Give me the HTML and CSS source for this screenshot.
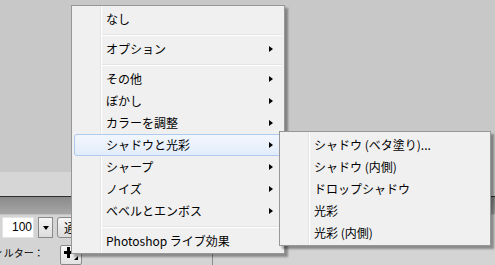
FILE: index.html
```html
<!DOCTYPE html>
<html lang="ja">
<head>
    <meta charset="UTF-8">
    <meta name="viewport" content="width=device-width, initial-scale=1.0">
    <title>フィルター</title>
    <link rel="stylesheet" href="styles.css">
</head>
<body>
    <div class="canvas"></div>
    <div class="strip-row">
        <div class="strip"></div>
    </div>
    <div class="panel-head"></div>
    <div class="panel-body">
        <div class="row">
            <div class="num">100</div>
            <div class="drop"></div>
            <div class="btn">通常</div>
        </div>
        <div class="row row-filter">
            <span class="label">フィルター：</span>
            <div class="add-btn">
                <svg width="22" height="20" viewBox="0 0 22 20">
                    <path d="M7 2h3v4h3v3h-3v4H7V9H4V6h3z" fill="#000"/>
                    <path d="M18 11v4h-4z" fill="#000"/>
                </svg>
            </div>
            <div class="divider"></div>
        </div>
    </div>

    <div class="menu main-menu">
        <div class="item">なし</div>
        <div class="sep"></div>
        <div class="item has-sub">オプション</div>
        <div class="sep"></div>
        <div class="item has-sub">その他</div>
        <div class="item has-sub">ぼかし</div>
        <div class="item has-sub">カラーを調整</div>
        <div class="item has-sub active">シャドウと光彩</div>
        <div class="item has-sub">シャープ</div>
        <div class="item has-sub">ノイズ</div>
        <div class="item has-sub">ベベルとエンボス</div>
        <div class="sep"></div>
        <div class="item">Photoshop ライブ効果</div>
    </div>

    <div class="menu sub-menu">
        <div class="item">シャドウ (ベタ塗り)...</div>
        <div class="item">シャドウ (内側)</div>
        <div class="item">ドロップシャドウ</div>
        <div class="item">光彩</div>
        <div class="item">光彩 (内側)</div>
    </div>
</body>
</html>
```

FILE: styles.css
```css
body {
    margin: 0;
    width: 495px;
    height: 265px;
    overflow: hidden;
    position: relative;
    background: #d4d4d4;
    font-family: "Noto Sans CJK JP", "Noto Sans", sans-serif;
    font-size: 12px;
    color: #000;
}
.canvas {
    height: 172px;
    background: #c8c8c8;
}
.strip-row {
    display: flex;
    background: #c8c8c8;
}
.strip {
    width: 490px;
    height: 24px;
    background: #d6d6d6;
}
.panel-head {
    height: 17px;
    border-top: 1px solid #2e2e2e;
    border-bottom: 1px solid #c2c2c2;
    background: linear-gradient(#8a8a8a, #a6a6a6);
}
.panel-body {
    padding: 2px 0 0 2px;
}
.row {
    display: flex;
    align-items: flex-start;
}
.num {
    width: 32px;
    height: 21px;
    box-sizing: border-box;
    padding-left: 9px;
    background: #fff;
    border: 1px solid #e4e4e4;
    font-family: "Liberation Sans", Arial, sans-serif;
    font-size: 12px;
    line-height: 19px;
}
.drop {
    width: 15px;
    height: 21px;
    margin-left: 4px;
    box-sizing: border-box;
    border: 1px solid #8a8a8a;
    background: linear-gradient(#f6f6f6, #dcdcdc);
    display: flex;
    align-items: center;
    justify-content: center;
}
.drop::after {
    content: "";
    border-top: 4px solid #000;
    border-left: 3.5px solid transparent;
    border-right: 3.5px solid transparent;
}
.btn {
    height: 21px;
    margin-left: 4px;
    padding: 0 6px;
    box-sizing: border-box;
    border: 1px solid #8a8a8a;
    border-radius: 3px;
    background: linear-gradient(#f6f6f6, #dcdcdc);
    line-height: 19px;
}
.row-filter {
    margin-top: 7px;
    margin-left: -2px;
}
.label {
    width: 76px;
    margin-left: -16px;
    font-size: 10px;
    line-height: 16px;
    margin-top: 0;
}
.add-btn {
    width: 22px;
    height: 20px;
    box-sizing: border-box;
    border: 1px solid #8a8a8a;
    border-radius: 2px;
    background: linear-gradient(#f8f8f8, #e2e2e2);
}
.add-btn svg {
    display: block;
    margin: -1px;
}
.divider {
    width: 1px;
    height: 14px;
    margin: 8px 0 0 130px;
    background: #8c8c8c;
}

/* menus */
.menu {
    position: absolute;
    box-sizing: border-box;
    padding: 2px 2px 1px;
    border: 1px solid #979797;
    background-color: #f0f0f0;
    background-image: linear-gradient(to right, transparent 28px, #e2e3e3 28px, #e2e3e3 29px, #fff 29px, #fff 30px, transparent 30px);
    box-shadow: 3px 3px 2px rgba(0, 0, 0, 0.35);
}
.main-menu {
    left: 71px;
    top: 5px;
    width: 214px;
}
.sub-menu {
    left: 279px;
    top: 131px;
    width: 212px;
}
.item {
    height: 22px;
    line-height: 20px;
    box-sizing: border-box;
    padding: 0 8px 0 31px;
    border: 1px solid transparent;
    border-radius: 3px;
    display: flex;
    align-items: center;
    justify-content: space-between;
    white-space: nowrap;
}
.has-sub::after {
    content: "";
    border-left: 4px solid #000;
    border-top: 3.5px solid transparent;
    border-bottom: 3.5px solid transparent;
}
.active {
    border-color: #aecbef;
    background: linear-gradient(#f2f7fe, #e2ecfa);
}
.sep {
    height: 8px;
    margin-left: 28px;
    background: linear-gradient(transparent 4px, #e2e3e3 4px, #e2e3e3 5px, #fff 5px, #fff 6px, transparent 6px);
}
```
